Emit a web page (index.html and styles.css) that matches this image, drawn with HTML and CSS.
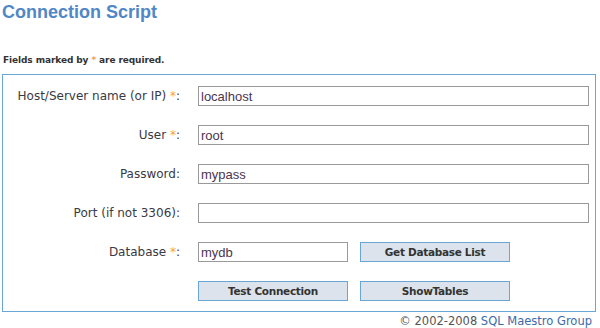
FILE: index.html
```html
<!DOCTYPE html>
<html lang="en">
<head>
    <meta charset="UTF-8">
    <title>Connection Script</title>
    <link rel="stylesheet" href="styles.css">
</head>
<body>
    <h1 class="title">Connection Script</h1>
    <p class="note">Fields marked by <span class="req">*</span> are required.</p>

    <form class="conn-box">
        <label class="label" for="host">Host/Server name (or IP) <span class="req">*</span>:</label>
        <input type="text" class="field" id="host" value="localhost">

        <label class="label" for="user">User <span class="req">*</span>:</label>
        <input type="text" class="field" id="user" value="root">

        <label class="label" for="pass">Password:</label>
        <input type="text" class="field" id="pass" value="mypass">

        <label class="label" for="port">Port (if not 3306):</label>
        <input type="text" class="field" id="port" value="">

        <label class="label" for="db">Database <span class="req">*</span>:</label>
        <div class="pair">
            <input type="text" class="field short" id="db" value="mydb">
            <button type="button" class="btn">Get Database List</button>
        </div>

        <span></span>
        <div class="pair">
            <button type="button" class="btn">Test Connection</button>
            <button type="button" class="btn">ShowTables</button>
        </div>
    </form>

    <div class="footer">&copy; 2002-2008 <a href="#" class="footer-link">SQL Maestro Group</a></div>
</body>
</html>
```

FILE: styles.css
```css
body {
    margin: 0;
    padding: 0 4px 0 2px;
    background-color: white;
    font-family: 'DejaVu Sans', Verdana, sans-serif;
    color: #333;
}
.title {
    margin: 0;
    padding-top: 2px;
    font-family: 'Liberation Sans', Arial, sans-serif;
    font-size: 18px;
    line-height: 20px;
    font-weight: bold;
    color: #5087c7;
}
.note {
    margin: 32px 0 0 1px;
    font-size: 9px;
    line-height: 12px;
    font-weight: bold;
    letter-spacing: -0.1px;
    color: #333;
}
.req {
    color: #f5a050;
}
.conn-box {
    margin: 8px 0 0 0;
    border: 1px solid #6aa6d4;
    padding: 11px 6px 10px 0;
    display: grid;
    grid-template-columns: 177px 391px;
    column-gap: 18px;
    row-gap: 19px;
    align-items: center;
}
.label {
    text-align: right;
    font-size: 12px;
    color: #3a3a44;
}
.field {
    box-sizing: border-box;
    width: 391px;
    height: 20px;
    margin: 0;
    padding: 0 2px;
    border: 1px solid #999;
    font-family: 'Liberation Sans', Arial, sans-serif;
    font-size: 13px;
    color: #4a3450;
    outline: none;
}
.field.short {
    width: 150px;
}
.pair {
    display: flex;
    gap: 12px;
    align-items: center;
}
.btn {
    box-sizing: border-box;
    width: 150px;
    height: 20px;
    margin: 0;
    padding: 0;
    background-color: #dce3ec;
    border: 1px solid #6aa6d4;
    font-family: 'DejaVu Sans', Verdana, sans-serif;
    font-size: 10.5px;
    font-weight: bold;
    letter-spacing: -0.3px;
    color: #333;
    cursor: pointer;
}
.footer {
    text-align: right;
    padding: 2px 4px 0 0;
    font-size: 11.5px;
    line-height: 14px;
    color: #555;
}
.footer-link {
    color: #3d6aa8;
    text-decoration: none;
}
```
